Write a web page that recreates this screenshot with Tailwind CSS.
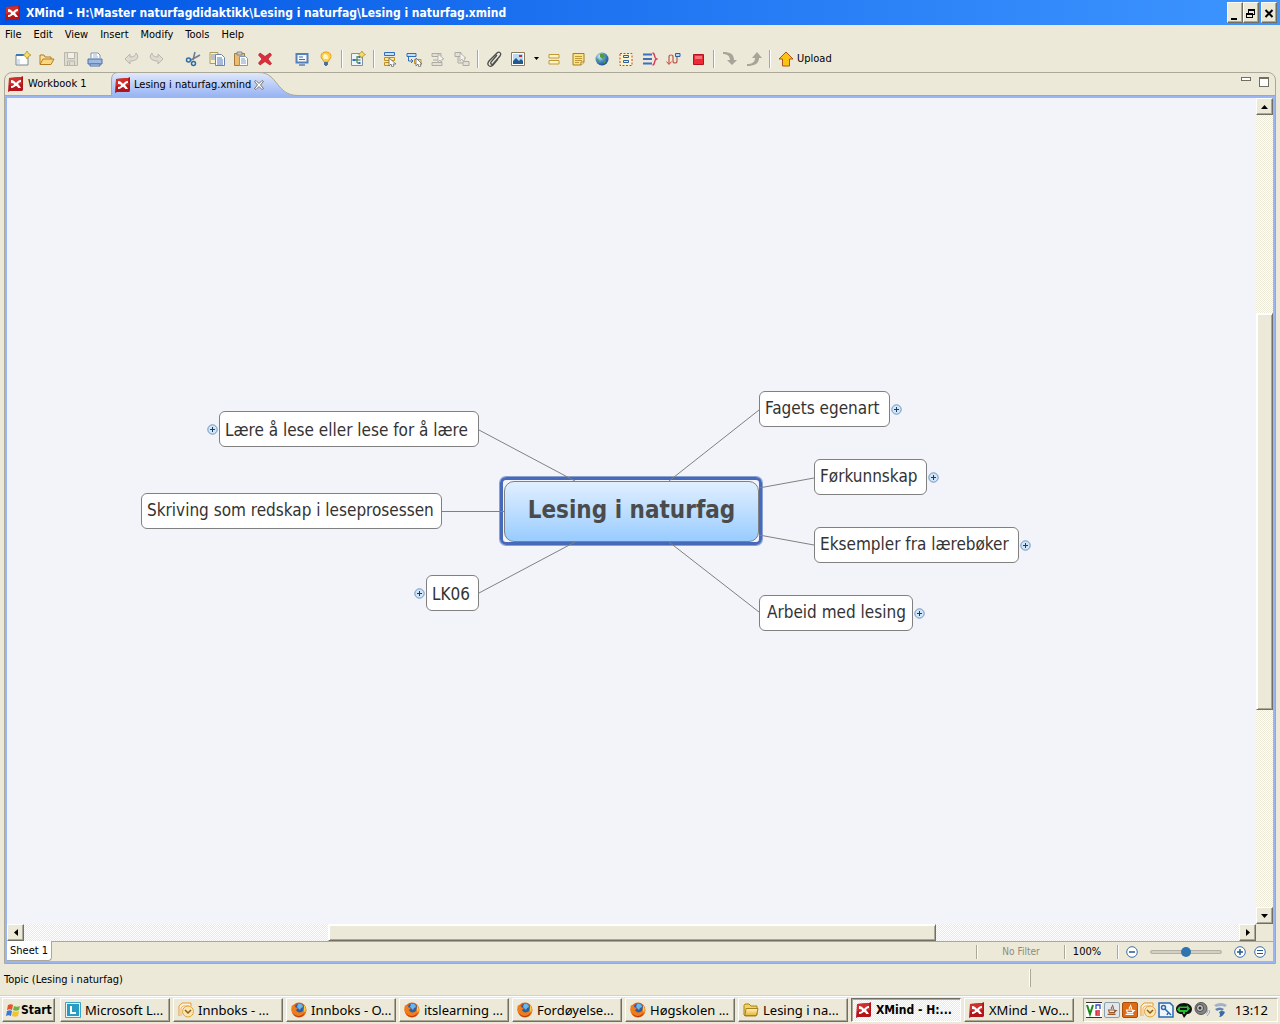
<!DOCTYPE html>
<html lang="no">
<head>
<meta charset="utf-8">
<title>XMind - Lesing i naturfag.xmind</title>
<script src="https://cdn.jsdelivr.net/npm/@tailwindcss/browser@4"></script>
</head>
<body class="relative flex min-h-screen flex-col overflow-hidden bg-[#ece9d8] font-['DejaVu_Sans_Condensed','DejaVu_Sans',sans-serif] text-[11px] leading-[14px] text-black">

<!-- shared icons -->
<svg class="absolute size-0" aria-hidden="true">
  <linearGradient id="g-gold" x1="0" y1="0" x2="0" y2="1"><stop offset="0" stop-color="#fff3b8"/><stop offset="1" stop-color="#e6b53c"/></linearGradient>
  <linearGradient id="g-tab" x1="0" y1="0" x2="0" y2="1"><stop offset="0" stop-color="#e1e9fb"/><stop offset="1" stop-color="#99b5f3"/></linearGradient>
  <radialGradient id="g-globe" cx=".35" cy=".3" r=".8"><stop offset="0" stop-color="#d6ecfb"/><stop offset=".5" stop-color="#4a8cc8"/><stop offset="1" stop-color="#173f7a"/></radialGradient>
  <symbol id="i-xmind" viewBox="0 0 16 16">
    <path d="M1 2 13 1 15 0 15 14 14 15 2 15 0 16Z" fill="#b3141a"/>
    <path d="M1 2 13 1 14 8 1 9Z" fill="#cf2f2b"/>
    <path d="M3 4c3 0 4 2 5 3 1-1 2-3 5-3v2c-2 0-2 1-3 2 1 1 2 2 3 4h-3c0-1-1-2-2-2s-2 2-5 2v-2c2 0 3-1 3-2S4 7 3 7Z" fill="#fff"/>
  </symbol>
  <symbol id="i-fox" viewBox="0 0 16 16">
    <circle cx="8" cy="8" r="7.500" fill="#e0651a"/>
    <circle cx="8.500" cy="6.500" r="5" fill="#2a5fa8"/>
    <path d="M7 2c2-1 5 0 5 3l-2 1-1 2-3-3Z" fill="#6db6ea"/>
    <path d="M1 3c1 1 2 1 3 1 0 1 1 2 3 2L5 8c1 3 5 3 7 1l1-5c3 3 2 8-1 10s-8 2-10-2C0 9 0 6 1 3Z" fill="#ef7d1d"/>
    <path d="M2 11c3 4 9 4 12-1-1 4-4 5-6 5s-5-1-6-4Z" fill="#b8390f"/>
    <path d="M13 3c2 2 2 5 1 8l-1-3Z" fill="#fbd03c"/>
  </symbol>
  <symbol id="i-outlook" viewBox="0 0 16 16">
    <path d="M1 14V4l3-3h9v3" fill="#fdf3dc" stroke="#e8973a"/><path d="M3 14V6l2-2h6" fill="none" stroke="#f0b160"/>
    <circle cx="10" cy="9.500" r="5.500" fill="#fbe6b0" stroke="#e0a23c"/>
    <path d="m7 8 3 3 3-3" fill="none" stroke="#8a5c1c" stroke-width="1.500"/>
  </symbol>
  <symbol id="i-plus" viewBox="0 0 11 11">
    <circle cx="5.500" cy="5.500" r="4.700" fill="#cfe6f8" stroke="#6f93bd"/><path d="M3 5.500h5M5.500 3v5" stroke="#1d3c66"/>
  </symbol>
  <symbol id="i-java" viewBox="0 0 16 16">
    <path d="M8.500 2c2 2-3 3-1 5M10 4c-1 1-1 2 0 3" fill="none" stroke-width="1.200" stroke="currentColor"/>
    <path d="M4 8h7v3H5ZM11 8.500h2l-2 2M3 13h9" fill="none" stroke="currentColor" stroke-width="1.200"/>
  </symbol>
</svg>

<!-- title bar -->
<header class="flex h-[25px] items-center gap-[5px] bg-linear-to-r from-[#0054e3] to-[#3d95ff] pr-[3px] pl-[5px] text-white">
  <svg class="size-4"><use href="#i-xmind"/></svg>
  <h1 class="flex-1 text-[12px] leading-4 font-bold">XMind - H:\Master naturfagdidaktikk\Lesing i naturfag\Lesing i naturfag.xmind</h1>
  <div class="flex">
    <button aria-label="Minimize" class="h-[21px] w-4 border border-[#716f64] border-t-white border-l-white bg-[#ece9d8] shadow-[inset_-1px_-1px_#aca899]"><svg class="size-[14px]" shape-rendering="crispEdges"><path d="M3 12h6v2H3Z"/></svg></button>
    <button aria-label="Restore" class="h-[21px] w-4 border border-[#716f64] border-t-white border-l-white bg-[#ece9d8] shadow-[inset_-1px_-1px_#aca899]"><svg class="size-[14px]" shape-rendering="crispEdges" fill="none" stroke="#000"><path d="M4.500 7V3.500h6v5H9M4 4.500h7M2.500 7.500h6v4h-6ZM2 8.500h7"/></svg></button>
    <button aria-label="Close" class="ml-[2px] h-[21px] w-4 border border-[#716f64] border-t-white border-l-white bg-[#ece9d8] shadow-[inset_-1px_-1px_#aca899]"><svg class="size-[14px]"><path d="m3.500 4 7 7m0-7-7 7" stroke="#000" stroke-width="2"/></svg></button>
  </div>
</header>

<!-- menu bar -->
<nav class="flex h-5 items-center gap-3 pl-[5px]">
  <button>File</button><button>Edit</button><button>View</button><button>Insert</button><button>Modify</button><button>Tools</button><button>Help</button>
</nav>

<!-- tool bar -->
<div role="toolbar" class="flex h-[27px] items-center pl-[11px]">
  <button aria-label="New" class="grid w-6 place-items-center"><svg class="size-4"><path d="M1 4h12v10H1Z" fill="#fff" stroke="#7d8794"/><path d="M1 3h11v2H1Z" fill="#3c78b4"/><path d="M2 8h3v5H2Z" fill="#cfe4f4"/><path d="M12 0 13.500 2.500 16 4l-2.500 1.500L12 8l-1.500-2.500L8 4l2.500-1.500Z" fill="#f6dd6b" stroke="#a98a1c" stroke-width=".7"/></svg></button>
  <button aria-label="Open" class="grid w-6 place-items-center"><svg class="size-4"><path d="M1 13V4h4l1 2h6v2" fill="#f8e2a0" stroke="#b97b21"/><path d="m1 13.500 3-5.500h11l-3 5.500Z" fill="#f9d77e" stroke="#b97b21"/></svg></button>
  <button aria-label="Save" class="grid w-6 place-items-center"><svg class="size-4" fill="none" stroke="#b9b7ab"><path d="M1.500 1.500h13v13h-13Z" fill="#dedbd0"/><path d="M4.500 1.500h7v6h-7Z" fill="#f1efe6"/><path d="M4.500 14v-4h7v4M6.500 11v3"/></svg></button>
  <button aria-label="Print" class="grid w-6 place-items-center"><svg class="size-4"><path d="M4 7V2h7l2 2v3" fill="#fff" stroke="#7894bb"/><path d="M6 4h4M6 6h5" stroke="#9fb4d0"/><path d="M1 8h14v5H1Z" fill="#9db9e4" stroke="#4a70ad"/><path d="M3 13h10v2H3Z" fill="#cfdcf2" stroke="#4a70ad"/></svg></button>
  <span class="w-[13px]"></span>
  <button aria-label="Undo" class="grid w-6 place-items-center"><svg class="size-4"><path d="m1 8 5-5v3c3 0 6-1 6-4 4 4 1 8-6 8v3Z" fill="#dddbd2" stroke="#b9b7ab"/></svg></button>
  <button aria-label="Redo" class="grid w-6 place-items-center"><svg class="size-4"><path d="m15 8-5-5v3C7 6 4 5 4 2c-4 4-1 8 6 8v3Z" fill="#dddbd2" stroke="#b9b7ab"/></svg></button>
  <span class="w-[13px]"></span>
  <button aria-label="Cut" class="grid w-6 place-items-center"><svg class="size-4" fill="none"><path d="M10 1 8 9M15 4 6 9" stroke="#6f7f93" stroke-width="1.600"/><circle cx="3.500" cy="9" r="2" stroke="#2c6ba8" stroke-width="1.500"/><circle cx="8.500" cy="12.500" r="2" stroke="#2c6ba8" stroke-width="1.500"/></svg></button>
  <button aria-label="Copy" class="grid w-6 place-items-center"><svg class="size-4"><path d="M1 1.500h8v11H1Z" fill="#f7f0cf" stroke="#b09b5a"/><path d="M2 4h5M2 6h5M2 8h5" stroke="#7f93b5"/><path d="M6.500 3.500h6l3 3v8h-9Z" fill="#fff" stroke="#6a84ac"/><path d="M8 7h5M8 9h6M8 11h6M8 13h6" stroke="#4f79b8"/></svg></button>
  <button aria-label="Paste" class="grid w-6 place-items-center"><svg class="size-4"><path d="M1.500 2.500h10v12h-10Z" fill="#e9be73" stroke="#a97a37"/><path d="M4 1h5v3H4Z" fill="#c9c9c9" stroke="#888"/><path d="M6.500 5.500h6l2 2v7h-8Z" fill="#fff" stroke="#8397b4"/><path d="M8 8h4M8 10h5M8 12h5" stroke="#7f9ac0"/></svg></button>
  <button aria-label="Delete" class="grid w-6 place-items-center"><svg class="size-4"><path d="m3 2 5 3.500L13 2l1.500 2L11 8l3.500 4.500L13 14 8 10.500 3 14l-1.500-2L5 8 1.500 4Z" fill="#de2e3c" stroke="#b01c2c" stroke-width=".7"/></svg></button>
  <span class="w-[13px]"></span>
  <button aria-label="Presentation" class="grid w-6 place-items-center"><svg class="size-4"><path d="M2.500 3h11v8.500h-11Z" fill="#f4f8fd" stroke="#5580b8" stroke-width="2"/><path d="M5 6h4M5 8.500h6" stroke="#3c6cab"/><path d="M5 13h6v2H5Z" fill="#7c9ac4"/></svg></button>
  <button aria-label="Tips" class="grid w-6 place-items-center"><svg class="size-4"><path d="M8 1c-6 0-6 6-3 8l1 2h4l1-2c3-2 3-8-3-8Z" fill="#fcd04b" stroke="#e6a01c"/><path d="M7 3c-2 0-2 4-1 5h4c1-1 0-4-1-4Z" fill="#fff7c6"/><path d="M6 11h4v3H9v1H7v-1H6Z" fill="#4d6f9d"/></svg></button>
  <span class="grid w-2 place-items-center"><i class="h-[18px] w-[2px] border-r border-l border-r-white border-l-[#aca899]"></i></span>
  <button aria-label="New sheet" class="grid w-6 place-items-center"><svg class="size-4"><path d="M1.500 2.500h11v12h-11Z" fill="#eef4fb" stroke="#7d8ea6"/><path d="M4 9h3m0-3h3M7 5v7h3M6.500 9h4" stroke="#3d7a3d" fill="none"/><path d="M2.500 8h3v2h-3ZM8.500 5h2v2h-2ZM8.500 11h2v2h-2Z" fill="#2f6ebb"/><path d="M12 0 13 2l2.500 1.500L13 5l-1 2.500L10.500 5 8.500 3.500 10.500 2Z" fill="#f6dd6b" stroke="#a98a1c" stroke-width=".7"/></svg></button>
  <span class="grid w-2 place-items-center"><i class="h-[18px] w-[2px] border-r border-l border-r-white border-l-[#aca899]"></i></span>
  <button aria-label="Topic" class="grid w-6 place-items-center"><svg class="size-4"><path d="M2.500 1.500h10v3h-10Z" fill="#c8e0f6" stroke="#2f6ebb"/><path d="M2.500 6.500h10v3h-10ZM2.500 11.500h5v3h-5Z" fill="#fbe79c" stroke="#c19023"/><path d="M7 7v8l2-2 1 3 2-1-1-2h3Z" fill="#fff" stroke="#666" stroke-width=".8"/></svg></button>
  <button aria-label="Subtopic" class="grid w-6 place-items-center"><svg class="size-4"><path d="M1 2.500h9v3H1Z" fill="#c8e0f6" stroke="#2f6ebb"/><path d="M2.500 6v4H7M5 8l2 2-2 2" fill="none" stroke="#2f6ebb"/><path d="M8.500 8.500H15v4H8.500Z" fill="#fbe79c" stroke="#c19023"/><path d="M10 7v8l2-2 1 3 2-1-1-2h2Z" fill="#fff" stroke="#666" stroke-width=".8"/></svg></button>
  <button aria-label="Topic before" class="grid w-6 place-items-center"><svg class="size-4" fill="#e2e0d8" stroke="#aeaca2"><path d="M2 2.500h9v3H2ZM2 11.500h10v3H2ZM3 9h9"/><path d="M8 3v8l2-2 1 2 1-1v-2h2Z" fill="#f4f3ee" stroke-width=".8"/></svg></button>
  <button aria-label="Parent topic" class="grid w-6 place-items-center"><svg class="size-4" fill="#e2e0d8" stroke="#aeaca2"><path d="M1 1.500h6v4H1ZM9 10.500h6v4H9ZM4 6v6h5"/><path d="M6 2v8l2-2 1 2 2-1-1-2h2Z" fill="#f4f3ee" stroke-width=".8"/></svg></button>
  <span class="grid w-2 place-items-center"><i class="h-[18px] w-[2px] border-r border-l border-r-white border-l-[#aca899]"></i></span>
  <button aria-label="Attachment" class="grid w-6 place-items-center"><svg class="size-4"><path d="m11 4-6 7c-1 2 1 3 2 2l7-8c2-3-1-5-3-3L3 10c-3 4 1 7 4 4l5-6" fill="none" stroke="#4c4c4c" stroke-width="1.300"/></svg></button>
  <button aria-label="Image" class="grid w-6 place-items-center"><svg class="size-4"><path d="M1.500 1.500h13v13h-13Z" fill="#fff" stroke="#8a7c5a"/><path d="M3 3h10v10H3Z" fill="#b9dcf4"/><path d="m3 10 3-3 3 3 2-2 2 2v3H3Z" fill="#24598f"/><path d="M9 5h3" stroke="#d8242c" stroke-width="2"/></svg></button>
  <button aria-label="Image menu" class="grid w-3 place-items-center"><svg class="h-[3px] w-[5px]"><path d="M0 0h5L2.500 3Z"/></svg></button>
  <button aria-label="Label" class="grid w-6 place-items-center"><svg class="size-4" fill="#fdf3c4" stroke="#c19a34"><path d="M3 3.500h10v3.500H3ZM3 9.500h10V13H3Z"/></svg></button>
  <button aria-label="Notes" class="grid w-6 place-items-center"><svg class="size-4"><path d="M3 2.500h11v9L11 14H3Z" fill="#fbe583" stroke="#a87e1c"/><path d="M5 5.500h7M5 7.500h7M5 9.500h7M5 11.500h4" stroke="#c09a3a"/><path d="M11 14v-3h3" fill="#fff" stroke="#a87e1c"/></svg></button>
  <button aria-label="Hyperlink" class="grid w-6 place-items-center"><svg class="size-4"><circle cx="8" cy="8" r="6.500" fill="url(#g-globe)"/><path d="M6 3c3-1 5 1 5 2L9 8 6 6ZM9 9l3 1-2 3ZM2 7l3 2-1 2Z" fill="#4e9c3e"/></svg></button>
  <button aria-label="Boundary" class="grid w-6 place-items-center"><svg class="size-4"><path d="M2 2.500h12v12H2Z" fill="#fdf3c4" stroke="#c8452a" stroke-dasharray="2 1.500"/><path d="M5.500 4.500h5v2h-5ZM5.500 9.500h5v2h-5Z" fill="#e4eefa" stroke="#2f5f9b"/></svg></button>
  <button aria-label="Summary" class="grid w-6 place-items-center"><svg class="size-4" fill="none"><path d="M1 3.500h9M1 8h9M1 12.500h9" stroke="#3c70bd" stroke-width="2"/><path d="M10.500 2c3 0 1 5 4 6-3 1-1 6-4 6" stroke="#d8375a" stroke-width="1.400"/></svg></button>
  <button aria-label="Relationship" class="grid w-6 place-items-center"><svg class="size-4" fill="none"><path d="M3 13V6q0-2 2-2t2 2v4q0 2 2 2t2-2V6" stroke="#bf5a4a" stroke-width="1.200"/><path d="m.500 10.500 2.500 3 2.500-3" stroke="#d8452a"/><path d="M9.500 2.500H14v3H9.500Z" fill="#bcd7f2" stroke="#2f5f9b"/></svg></button>
  <button aria-label="Marker" class="grid w-6 place-items-center"><svg class="size-4"><path d="M3.500 3.500h10v10h-10Z" fill="#ee2a36" stroke="#b3131f"/><path d="M5 5h7v3H5Z" fill="#f57078"/></svg></button>
  <span class="grid w-2 place-items-center"><i class="h-[18px] w-[2px] border-r border-l border-r-white border-l-[#aca899]"></i></span>
  <button aria-label="Drill down" class="grid w-6 place-items-center"><svg class="size-4"><path d="M1 1c7 0 11 2 11 8h3l-5 5-5-5h3C8 5 5 3 1 3Z" fill="#a7a597"/></svg></button>
  <button aria-label="Drill up" class="grid w-6 place-items-center"><svg class="size-4"><path d="M1 15c7 0 12-2 12-8h3l-5-6-5 6h3c0 4-3 6-8 6Z" fill="#a7a597"/></svg></button>
  <span class="grid w-2 place-items-center"><i class="h-[18px] w-[2px] border-r border-l border-r-white border-l-[#aca899]"></i></span>
  <button class="ml-1 flex items-center gap-[3px]"><svg class="size-4"><path d="m8 1 7 7h-3.500v7h-7V8H1Z" fill="#fcc412" stroke="#b4501a"/></svg>Upload</button>
</div>

<!-- editor -->
<main class="mx-1 flex flex-1 flex-col rounded-t-lg border border-[#aca899]">
  <div class="relative flex h-[23px] border-b border-[#aca899]">
    <div role="tablist" class="flex">
      <button role="tab" class="flex w-[106px] items-center gap-1 pl-[3px]"><svg class="size-4"><use href="#i-xmind"/></svg>Workbook 1</button>
      <button role="tab" aria-selected="true" class="relative flex h-[23px] w-[186px] items-center gap-[3px] pl-1">
        <svg class="absolute top-[-1px] left-0 h-6 w-[187px]"><path d="M0 24V8Q0 .500 7 .500H148C167 .500 165 23.500 187 23.500V24Z" fill="url(#g-tab)"/><path d="M.500 24V8Q.500 .500 7 .500H148C167 .500 165 23.500 187 23.500" fill="none" stroke="#aca899"/></svg>
        <svg class="relative size-4"><use href="#i-xmind"/></svg><span class="relative whitespace-nowrap">Lesing i naturfag.xmind</span>
        <svg class="relative size-[10px]"><path d="M.500 1.500 2 .500l3 3 3-3 1.500 1L6.500 5l3 3.500L8 9.500l-3-3-3 3L.500 8.500 3.500 5Z" fill="#fff" stroke="#6f6f6f"/></svg>
      </button>
    </div>
    <div class="ml-auto flex items-start gap-2 pt-1 pr-[6px]">
      <button aria-label="Minimize editor" class="h-1 w-[10px] border border-[#716f64] bg-white"></button>
      <button aria-label="Maximize editor" class="h-[10px] w-[10px] border border-t-2 border-[#716f64] bg-white"></button>
    </div>
  </div>

  <div class="flex flex-1 flex-col border-2 border-[#99b5f3]">
    <div class="flex flex-1">
      <!-- map canvas -->
      <section class="relative flex-1 overflow-hidden bg-[#f3f4f9] text-[17px] leading-5 whitespace-nowrap text-[#333]">
        <div class="absolute top-[379px] left-[493px] h-[68px] w-[262px] rounded-md border-[3px] border-[#4669b9] ring-1 ring-[#4669b9]/60"></div>
        <svg class="absolute inset-0 size-full" fill="none" stroke="#808080"><path d="M472 332 568 383M435 413.500H497M472 495 568 444M662 383 752 312M752 390 807 380M752 437 807 447M662 444 752 514"/></svg>
        <div class="absolute top-[383px] left-[497px] flex h-[61px] w-[255px] items-center justify-center rounded-[10px] border border-[#808080] bg-linear-to-b from-[#e1efff] to-[#99ccff] pb-1 text-[24px] leading-8 font-bold text-[#4b4b4b]">Lesing i naturfag</div>
        <div class="absolute top-[293px] left-[752px] h-9 w-[131px] rounded-md border border-[#808080] bg-white pt-[6px] pl-[5px]">Fagets egenart</div>
        <div class="absolute top-[361px] left-[807px] h-9 w-[113px] rounded-md border border-[#808080] bg-white pt-[6px] pl-[5px]">Førkunnskap</div>
        <div class="absolute top-[429px] left-[807px] h-9 w-[205px] rounded-md border border-[#808080] bg-white pt-[6px] pl-[5px]">Eksempler fra lærebøker</div>
        <div class="absolute top-[497px] left-[752px] h-9 w-[154px] rounded-md border border-[#808080] bg-white pt-[6px] pl-[7px]">Arbeid med lesing</div>
        <div class="absolute top-[313px] left-[212px] h-9 w-[260px] rounded-md border border-[#808080] bg-white pt-2 pl-[5px]">Lære å lese eller lese for å lære</div>
        <div class="absolute top-[395px] left-[134px] h-9 w-[301px] rounded-md border border-[#808080] bg-white pt-[6px] pl-[5px]">Skriving som redskap i leseprosessen</div>
        <div class="absolute top-[477px] left-[419px] h-9 w-[53px] rounded-md border border-[#808080] bg-white pt-2 pl-[5px]">LK06</div>
        <button aria-label="Expand" class="absolute top-[306px] left-[884px]"><svg class="size-[11px]"><use href="#i-plus"/></svg></button>
        <button aria-label="Expand" class="absolute top-[374px] left-[921px]"><svg class="size-[11px]"><use href="#i-plus"/></svg></button>
        <button aria-label="Expand" class="absolute top-[442px] left-[1013px]"><svg class="size-[11px]"><use href="#i-plus"/></svg></button>
        <button aria-label="Expand" class="absolute top-[510px] left-[907px]"><svg class="size-[11px]"><use href="#i-plus"/></svg></button>
        <button aria-label="Expand" class="absolute top-[326px] left-[200px]"><svg class="size-[11px]"><use href="#i-plus"/></svg></button>
        <button aria-label="Expand" class="absolute top-[490px] left-[407px]"><svg class="size-[11px]"><use href="#i-plus"/></svg></button>
      </section>
      <!-- vertical scroll bar -->
      <div class="flex w-[17px] flex-col bg-[repeating-conic-gradient(#ffffff_0_25%,#ece9d8_0_50%)] bg-[length:2px_2px]">
        <button aria-label="Scroll up" class="grid h-[17px] place-items-center border border-[#716f64] border-t-white border-l-white bg-[#ece9d8] shadow-[inset_-1px_-1px_#aca899]"><svg class="h-1 w-[7px]"><path d="M0 4h7L3.500 0Z"/></svg></button>
        <div class="grow-[199]"></div>
        <div class="grow-[396] border border-[#716f64] border-t-white border-l-white bg-[#ece9d8] shadow-[inset_1px_1px_#fff,inset_-1px_-1px_#aca899]"></div>
        <div class="grow-[198]"></div>
        <button aria-label="Scroll down" class="grid h-[17px] place-items-center border border-[#716f64] border-t-white border-l-white bg-[#ece9d8] shadow-[inset_-1px_-1px_#aca899]"><svg class="h-1 w-[7px]"><path d="M0 0h7L3.500 4Z"/></svg></button>
      </div>
    </div>
    <!-- horizontal scroll bar -->
    <div class="flex h-[17px] pr-[17px]">
      <div class="flex flex-1 bg-[repeating-conic-gradient(#ffffff_0_25%,#ece9d8_0_50%)] bg-[length:2px_2px]">
        <button aria-label="Scroll left" class="grid w-[17px] place-items-center border border-[#716f64] border-t-white border-l-white bg-[#ece9d8] shadow-[inset_-1px_-1px_#aca899]"><svg class="h-[7px] w-1"><path d="M4 0v7L0 3.500Z"/></svg></button>
        <div class="grow-[305]"></div>
        <div class="grow-[608] border border-[#716f64] border-t-white border-l-white bg-[#ece9d8] shadow-[inset_1px_1px_#fff,inset_-1px_-1px_#aca899]"></div>
        <div class="grow-[304]"></div>
        <button aria-label="Scroll right" class="grid w-[17px] place-items-center border border-[#716f64] border-t-white border-l-white bg-[#ece9d8] shadow-[inset_-1px_-1px_#aca899]"><svg class="h-[7px] w-1"><path d="M0 0v7L4 3.500Z"/></svg></button>
      </div>
    </div>
    <!-- sheet bar -->
    <div class="flex h-5 border-t border-[#aca899]">
      <button class="-mt-px h-5 rounded-br-sm border-r border-b border-[#aca899] bg-white px-[3px]">Sheet 1</button>
      <div class="ml-auto flex items-center">
        <i class="h-[14px] w-[2px] border-r border-l border-r-white border-l-[#aca899]"></i>
        <button class="w-[86px] text-[10px] text-[#8c8a7e]">No Filter</button>
        <i class="h-[14px] w-[2px] border-r border-l border-r-white border-l-[#aca899]"></i>
        <button class="w-[51px] pr-[9px]">100%</button>
        <i class="h-[14px] w-[2px] border-r border-l border-r-white border-l-[#aca899]"></i>
        <button aria-label="Zoom out" class="ml-[7px]"><svg class="size-3"><circle cx="6" cy="6" r="5.300" fill="#fff" stroke="#3b6fad"/><path d="M3 6h6" stroke="#2a568f" stroke-width="1.500"/></svg></button>
        <input type="range" aria-label="Zoom" value="50" class="mx-3 h-1 w-[72px] appearance-none rounded-full border border-[#b3b1a5] bg-[#d2cfc2] [&::-webkit-slider-thumb]:size-[10px] [&::-webkit-slider-thumb]:appearance-none [&::-webkit-slider-thumb]:rounded-full [&::-webkit-slider-thumb]:bg-[#2f74ae]">
        <button aria-label="Zoom in" class="mr-2"><svg class="size-3"><circle cx="6" cy="6" r="5.300" fill="#fff" stroke="#3b6fad"/><path d="M3 6h6M6 3v6" stroke="#2a568f" stroke-width="1.500"/></svg></button>
        <button aria-label="Actual size" class="mr-[7px]"><svg class="size-3"><circle cx="6" cy="6" r="5.300" fill="#fff" stroke="#3b6fad"/><path d="M3 4.500h6M3 7.500h6" stroke="#2a568f"/></svg></button>
      </div>
    </div>
  </div>
</main>

<!-- status line -->
<div class="flex h-[31px] items-center pr-[249px] pl-1">
  <p class="flex-1">Topic (Lesing i naturfag)</p>
  <i class="mb-1 h-[18px] w-[2px] border-r border-l border-r-[#aca899] border-l-white"></i>
</div>

<!-- task bar -->
<footer class="flex h-[29px] gap-[3px] border-t border-[#d6d2c2] pt-[2px] pr-[2px] pb-[2px] pl-[2px] font-['Noto_Sans',sans-serif] text-[13px] leading-5 shadow-[inset_0_1px_#fff]">
  <button class="mr-[2px] flex w-[53px] items-center border border-[#716f64] border-t-white border-l-white pl-[2px] font-['DejaVu_Sans_Condensed','DejaVu_Sans',sans-serif] text-[12px] font-bold shadow-[inset_-1px_-1px_#aca899]">
    <svg class="size-4 shrink-0"><path d="M3 3c2-1 4-1 5 0L7 8C5 7 4 7 2 8Z" fill="#e4532a"/><path d="M9 4c2 1 4 1 6 0l-1 4c-2 1-4 1-6 0Z" fill="#6cb33f"/><path d="M2 9c2-1 4-1 5 0l-1 5c-2-1-3-1-5 0Z" fill="#3b78d8"/><path d="M8 9c2 1 4 1 6 0l-1 5c-2 1-4 1-6 0Z" fill="#f4c22b"/></svg>Start</button>
  <button class="flex max-w-[110px] flex-1 items-center gap-1 border border-[#716f64] border-t-white border-l-white pl-1 whitespace-nowrap shadow-[inset_-1px_-1px_#aca899]"><svg class="size-4 shrink-0"><path d="M.500.500h15v15H.500Z" fill="#eaf6fb" stroke="#3aa3c7"/><path d="M2 2h12v12H2Z" fill="#2a9cc4"/><path d="M6 4v7h5" fill="none" stroke="#fff" stroke-width="2"/></svg>Microsoft L...</button>
  <button class="flex max-w-[110px] flex-1 items-center gap-1 border border-[#716f64] border-t-white border-l-white pl-1 whitespace-nowrap shadow-[inset_-1px_-1px_#aca899]"><svg class="size-4 shrink-0"><use href="#i-outlook"/></svg>Innboks - ...</button>
  <button class="flex max-w-[110px] flex-1 items-center gap-1 border border-[#716f64] border-t-white border-l-white pl-1 whitespace-nowrap shadow-[inset_-1px_-1px_#aca899]"><svg class="size-4 shrink-0"><use href="#i-fox"/></svg>Innboks - O...</button>
  <button class="flex max-w-[110px] flex-1 items-center gap-1 border border-[#716f64] border-t-white border-l-white pl-1 whitespace-nowrap shadow-[inset_-1px_-1px_#aca899]"><svg class="size-4 shrink-0"><use href="#i-fox"/></svg>itslearning ...</button>
  <button class="flex max-w-[110px] flex-1 items-center gap-1 border border-[#716f64] border-t-white border-l-white pl-1 whitespace-nowrap shadow-[inset_-1px_-1px_#aca899]"><svg class="size-4 shrink-0"><use href="#i-fox"/></svg>Fordøyelse...</button>
  <button class="flex max-w-[110px] flex-1 items-center gap-1 border border-[#716f64] border-t-white border-l-white pl-1 whitespace-nowrap shadow-[inset_-1px_-1px_#aca899]"><svg class="size-4 shrink-0"><use href="#i-fox"/></svg>Høgskolen ...</button>
  <button class="flex max-w-[110px] flex-1 items-center gap-1 border border-[#716f64] border-t-white border-l-white pl-1 whitespace-nowrap shadow-[inset_-1px_-1px_#aca899]"><svg class="size-4 shrink-0"><path d="M1 3.500 2 2h4l2 2h6v9l-1 1H2l-1-1Z" fill="#f3d35e" stroke="#a8821c"/><path d="M3 6.500h12l-1.500 7H2Z" fill="url(#g-gold)" stroke="#a8821c"/></svg>Lesing i na...</button>
  <button aria-pressed="true" class="flex max-w-[110px] flex-1 items-center gap-1 border border-white border-t-[#716f64] border-l-[#716f64] bg-[repeating-conic-gradient(#ffffff_0_25%,#ece9d8_0_50%)] bg-[length:2px_2px] pl-1 font-['DejaVu_Sans_Condensed','DejaVu_Sans',sans-serif] text-[12px] font-bold whitespace-nowrap shadow-[inset_1px_1px_#aca899]"><svg class="size-4 shrink-0"><use href="#i-xmind"/></svg>XMind - H:...</button>
  <button class="flex max-w-[110px] flex-1 items-center gap-1 border border-[#716f64] border-t-white border-l-white pl-1 whitespace-nowrap shadow-[inset_-1px_-1px_#aca899]"><svg class="size-4 shrink-0"><use href="#i-xmind"/></svg>XMind - Wo...</button>
  <div class="ml-auto flex w-[195px] items-center gap-[2px] border border-white border-t-[#aca899] border-l-[#aca899] pl-[2px]">
    <svg class="size-4"><path d="M0 0h16v16H0Z" fill="#fff"/><path d="M0 .500h16M0 15.500h16" stroke="#333"/><path d="m1 3 3 9 3-9" fill="none" stroke="#1a8a1a" stroke-width="2"/><path d="M10 7V3h4v4" fill="none" stroke="#2a4fd0" stroke-width="1.300"/><path d="M14 9h-4v4h4M10 11h4" fill="none" stroke="#d3202e" stroke-width="1.300"/></svg>
    <svg class="size-4 rounded-xs border border-[#8c9dab] bg-[#dfe8ef] text-[#9a5a2c]" viewBox="0 0 16 16"><use href="#i-java"/></svg>
    <svg class="size-4 rounded-xs border border-[#a84c08] bg-[#dd6a14] text-white" viewBox="0 0 16 16"><use href="#i-java"/></svg>
    <svg class="size-4"><use href="#i-outlook"/></svg>
    <svg class="size-4"><path d="M1 1h11l3 3v11H1Z" fill="#eef6fc" stroke="#2a68b0" stroke-width="1.500"/><circle cx="5.500" cy="5.500" r="2" fill="none" stroke="#2a68b0" stroke-width="1.500"/><path d="m7 7 6 6m-3-2-1 2" stroke="#2a68b0" stroke-width="1.500" fill="none"/></svg>
    <svg class="size-4"><path d="M8 1c5 0 8 3 8 6s-2 5-5 5l-3 4-2-4c-4 0-6-2-6-5s3-6 8-6Z" fill="#111"/><path d="M3 4.500h8V3l3 3.500-3 3.500H9v2H7v-2H3l-2-2.500Z" fill="#1fc02c"/><path d="M4 6h7v2H4Z" fill="#111"/></svg>
    <svg class="size-4"><circle cx="7" cy="6.500" r="6" fill="#858585" stroke="#555"/><circle cx="6" cy="6" r="3.500" fill="#c9c9c9" stroke="#444"/><circle cx="6" cy="6" r="1.500" fill="#333"/><path d="M12 12q2-2 2-4M13 14q3-3 3-6" fill="none" stroke="#9aa6dd"/></svg>
    <svg class="size-4"><path d="M2 3q7-4 13 0l-2 2Q9 3 4 5Z" fill="#9fb2cc"/><path d="M3 7q5-3 9 0l-2 2Q8 7 5 9Z" fill="#5f83b4"/><path d="M7 10q3-2 6 0-2 5-6 5 2-2 0-5Z" fill="#3c68a6"/></svg>
    <time class="ml-auto pr-[9px]">13:12</time>
  </div>
</footer>
</body>
</html>
